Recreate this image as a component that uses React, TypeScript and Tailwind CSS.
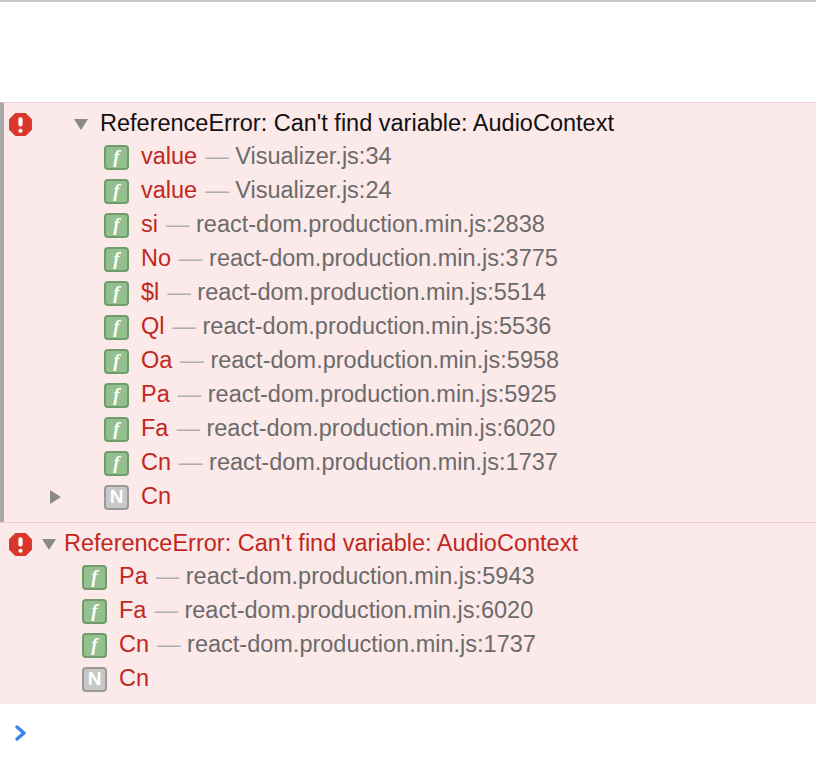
import React from "react";

const F = ({ n }: { n?: boolean }) => (
  <span
    className={`inline-flex items-center justify-center w-[25px] h-[25px] rounded-[4px] border-2 text-white text-[19px] font-bold ${
      n ? "bg-[#c8c8c8] border-[#9a9a9a]" : "bg-[#93c08e] border-[#6f9c6a] italic"
    }`}
    style={{ fontFamily: n ? "'Liberation Sans', sans-serif" : "'Liberation Serif', serif" }}
  >
    {n ? "N" : "f"}
  </span>
);

const ErrIcon = () => (
  <svg width="25" height="25" viewBox="0 0 24 24">
    <polygon points="7,1 17,1 23,7 23,17 17,23 7,23 1,17 1,7" fill="#d8372a" />
    <rect x="10" y="5" width="4" height="9" rx="2" fill="white" />
    <circle cx="12" cy="18" r="2" fill="white" />
  </svg>
);

const Tri = ({ open = true }: { open?: boolean }) => (
  <svg width="18" height="18" viewBox="0 0 18 18">
    {open ? <polygon points="2,4 16,4 9,15" fill="#8a8a8a" /> : <polygon points="4,2 15,9 4,16" fill="#8a8a8a" />}
  </svg>
);

const Frame = ({ fn, loc, n }: { fn: string; loc?: string; n?: boolean }) => (
  <div className="flex items-center h-[34px] gap-[12px]">
    <F n={n} />
    <span className="text-[#c0281e]">{fn}</span>
    {loc && (
      <span className="text-[#6b6b6b] -ml-[4px]">
        <span className="text-[#b0b0b0]">—</span> {loc}
      </span>
    )}
  </div>
);

const r = "react-dom.production.min.js:";

export default function App() {
  return (
    <div className="w-[816px] h-[768px] bg-white text-[23.5px] relative" style={{ fontFamily: "'Liberation Sans', Arial, sans-serif" }}>
      <div className="h-[2px] bg-[#c9c9c9]" />
      <div className="h-[100px]" />
      <div className="bg-[#fce9e9] border-l-4 border-[#a8a8a8] border-t border-t-[#f5cfcf] pt-[5px] pb-[8px]">
        <div className="flex items-center h-[32px]">
          <div className="w-[60px] pl-[4px] flex"><ErrIcon /></div>
          <div className="w-[28px] ml-[8px]"><Tri /></div>
          <span className="text-[#111]">ReferenceError: Can't find variable: AudioContext</span>
        </div>
        <div className="pl-[100px]">
          <Frame fn="value" loc="Visualizer.js:34" />
          <Frame fn="value" loc="Visualizer.js:24" />
          <Frame fn="si" loc={r + "2838"} />
          <Frame fn="No" loc={r + "3775"} />
          <Frame fn="$l" loc={r + "5514"} />
          <Frame fn="Ql" loc={r + "5536"} />
          <Frame fn="Oa" loc={r + "5958"} />
          <Frame fn="Pa" loc={r + "5925"} />
          <Frame fn="Fa" loc={r + "6020"} />
          <Frame fn="Cn" loc={r + "1737"} />
        </div>
        <div className="flex items-center h-[34px]">
          <div className="w-[42px] ml-[42px]"><Tri open={false} /></div>
          <div className="pl-[16px]"><Frame fn="Cn" n /></div>
        </div>
      </div>
      <div className="bg-[#fce9e9] border-t border-[#f2c9c9] pt-[5px] pb-[8px]">
        <div className="flex items-center h-[32px]">
          <div className="w-[36px] pl-[8px] flex"><ErrIcon /></div>
          <div className="w-[24px] ml-[4px]"><Tri /></div>
          <span className="text-[#c0281e]">ReferenceError: Can't find variable: AudioContext</span>
        </div>
        <div className="pl-[82px]">
          <Frame fn="Pa" loc={r + "5943"} />
          <Frame fn="Fa" loc={r + "6020"} />
          <Frame fn="Cn" loc={r + "1737"} />
          <Frame fn="Cn" n />
        </div>
      </div>
      <div className="pl-[14px] pt-[20px]">
        <svg width="14" height="18" viewBox="0 0 14 18">
          <polyline points="3,3 10,9 3,15" fill="none" stroke="#3b82f6" strokeWidth="3.5" strokeLinecap="round" strokeLinejoin="round" />
        </svg>
      </div>
    </div>
  );
}
